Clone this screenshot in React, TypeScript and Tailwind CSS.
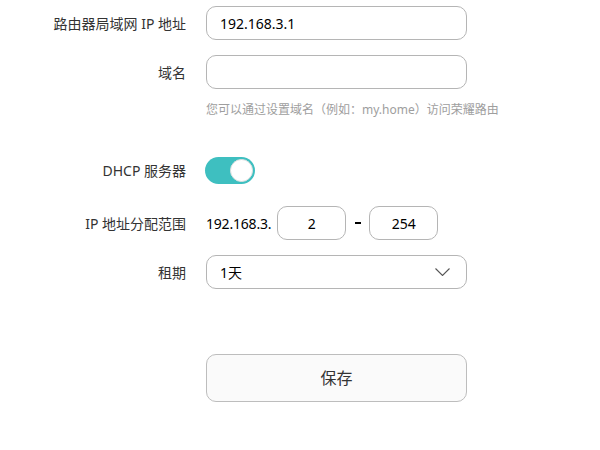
const font = { fontFamily: '"Noto Sans", "Noto Sans CJK SC", sans-serif' };

const Label = ({ children }: { children: React.ReactNode }) => (
  <div className="w-[186px] shrink-0 text-right text-[14px] text-[#333]">{children}</div>
);

export default function App() {
  return (
    <div className="w-[600px] h-[450px] bg-white pt-[6px]" style={font}>
      <div className="flex items-center gap-[20px] h-[34px]">
        <Label>路由器局域网 IP 地址</Label>
        <div className="w-[261px] h-[34px] rounded-[10px] border border-[#b5b5b5] flex items-center px-[13px] text-[14px] text-black">
          192.168.3.1
        </div>
      </div>

      <div className="flex items-center gap-[20px] h-[34px] mt-[15px]">
        <Label>域名</Label>
        <div className="w-[261px] h-[34px] rounded-[10px] border border-[#b5b5b5]" />
      </div>

      <div className="ml-[206px] mt-[13px] text-[12px] leading-[16px] text-[#9e9e9e]">
        您可以通过设置域名（例如：my.home）访问荣耀路由
      </div>

      <div className="flex items-center gap-[20px] h-[27px] mt-[39px]">
        <Label>DHCP 服务器</Label>
        <div className="w-[50px] h-[27px] rounded-full bg-[#3ebfc0] flex items-center justify-end pr-[2px] ml-[-1px]">
          <div className="w-[23px] h-[23px] rounded-full bg-white border border-[#e0e0e0]" />
        </div>
      </div>

      <div className="flex items-center gap-[20px] h-[34px] mt-[22px]">
        <Label>IP 地址分配范围</Label>
        <div className="flex items-center">
          <span className="text-[14px] text-black tracking-[-0.2px]">192.168.3.</span>
          <div className="ml-[6px] w-[69px] h-[34px] rounded-[10px] border border-[#b5b5b5] flex items-center justify-center text-[14px] text-black">
            2
          </div>
          <div className="w-[23px] flex justify-center">
            <div className="w-[6px] h-[2px] bg-black" />
          </div>
          <div className="w-[69px] h-[34px] rounded-[10px] border border-[#b5b5b5] flex items-center justify-center text-[14px] text-black">
            254
          </div>
        </div>
      </div>

      <div className="flex items-center gap-[20px] h-[34px] mt-[15px]">
        <Label>租期</Label>
        <div className="w-[261px] h-[34px] rounded-[10px] border border-[#b5b5b5] flex items-center justify-between pl-[13px] pr-[16px] text-[14px] text-black">
          <span>1天</span>
          <svg width="15" height="8" viewBox="0 0 15 8" fill="none" stroke="#555" strokeWidth="1.1">
            <polyline points="0.5,0.5 7.5,7.5 14.5,0.5" />
          </svg>
        </div>
      </div>

      <div className="ml-[206px] mt-[65px] w-[261px] h-[48px] rounded-[10px] border border-[#bdbdbd] bg-[#fafafa] flex items-center justify-center text-[16px] text-[#333]">
        保存
      </div>
    </div>
  );
}
